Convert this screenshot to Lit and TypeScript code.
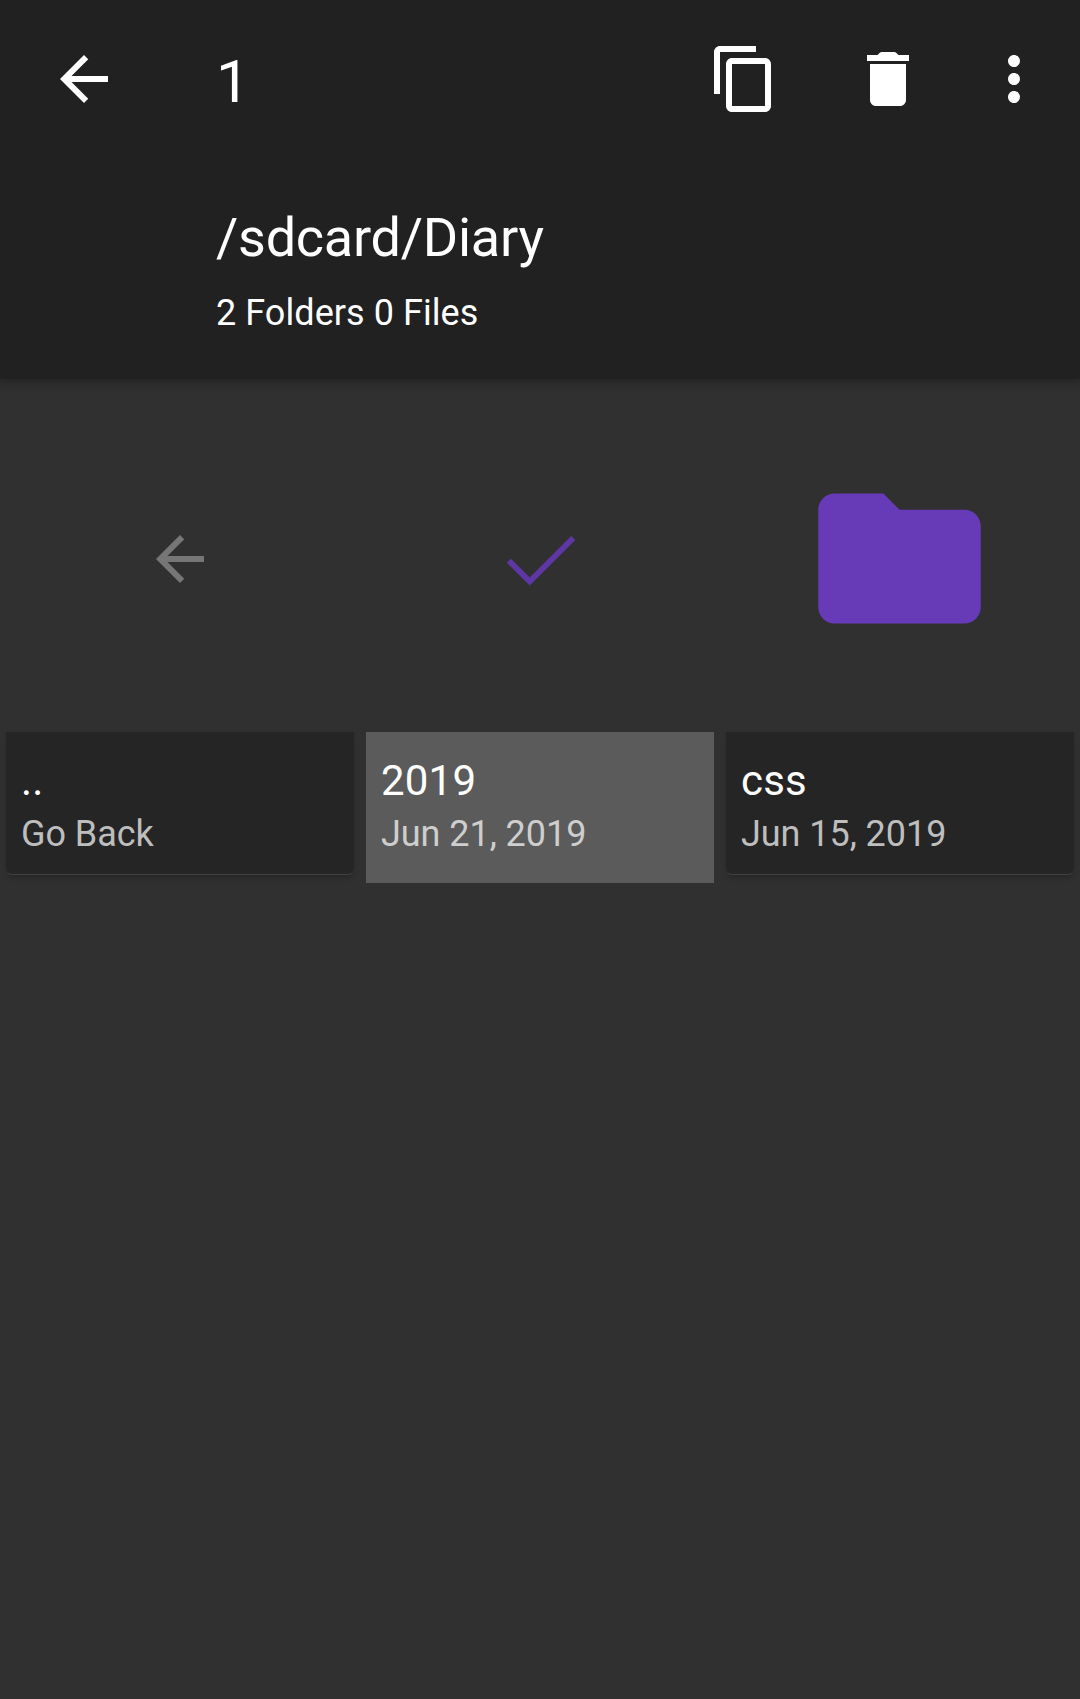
import { LitElement, html, css, svg } from "lit";
import { customElement } from "lit/decorators.js";
import { classMap } from "lit/directives/class-map.js";

const BACK = "M20 11H7.83l5.59-5.59L12 4l-8 8 8 8 1.41-1.41L7.83 13H20v-2z";
const COPY =
  "M16 1H4c-1.1 0-2 .9-2 2v14h2V3h12V1zm3 4H8c-1.1 0-2 .9-2 2v14c0 1.1.9 2 2 2h11c1.1 0 2-.9 2-2V7c0-1.1-.9-2-2-2zm0 16H8V7h11v14z";
const TRASH =
  "M6 19c0 1.1.9 2 2 2h8c1.1 0 2-.9 2-2V7H6v12zM19 4h-3.5l-.7-.7c-.2-.2-.45-.3-.7-.3H9.9c-.25 0-.5.1-.7.3L8.5 4H5v2h14V4z";
const MORE =
  "M12 8c1.1 0 2-.9 2-2s-.9-2-2-2-2 .9-2 2 .9 2 2 2zm0 2c-1.1 0-2 .9-2 2s.9 2 2 2 2-.9 2-2-.9-2-2-2zm0 6c-1.1 0-2 .9-2 2s.9 2 2 2 2-.9 2-2-.9-2-2-2z";
const CHECK = "M8.9 33.7L29.7 54.5 73.2 11";
const FOLDER =
  "M10 4H4c-1.1 0-2 .9-2 2v12c0 1.1.9 2 2 2h16c1.1 0 2-.9 2-2V8c0-1.1-.9-2-2-2h-8l-2-2z";

const icon = (d: string, cls = "icon") =>
  html`<svg class=${cls} viewBox="0 0 24 24">${svg`<path d=${d} />`}</svg>`;

const entries = [
  { name: "..", note: "Go Back", art: icon(BACK, "icon dim"), selected: false },
  {
    name: "2019",
    note: "Jun 21, 2019",
    art: html`<svg class="check" viewBox="0 0 80 64">${svg`<path d=${CHECK} />`}</svg>`,
    selected: true,
  },
  { name: "css", note: "Jun 15, 2019", art: icon(FOLDER, "folder"), selected: false },
];

@customElement("app-root")
export class AppRoot extends LitElement {
  static styles = css`
    :host {
      display: flex;
      flex-direction: column;
      height: 1699px;
      background: #303030;
      color: #fff;
      font-family: Roboto, sans-serif;
    }
    svg {
      display: block;
      fill: currentColor;
    }
    .icon {
      width: 72px;
      height: 72px;
    }
    header {
      box-sizing: border-box;
      height: 379px;
      background: #212121;
      box-shadow: 0 2px 9px 2px rgba(0, 0, 0, 0.25);
    }
    .bar {
      display: flex;
      align-items: center;
      height: 158px;
      padding: 0 30px 0 48px;
    }
    .count {
      flex: 1;
      padding: 6px 0 0 96px;
      font-size: 60px;
      line-height: 70px;
    }
    .actions {
      display: flex;
      gap: 72px;
    }
    .more {
      margin-left: -18px;
    }
    .path {
      padding: 48px 0 0 216px;
      font-size: 54px;
      line-height: 64px;
      letter-spacing: -0.25px;
    }
    .summary {
      padding: 22px 0 0 216px;
      font-size: 36px;
      line-height: 42px;
      letter-spacing: 0.06px;
    }
    .grid {
      display: grid;
      grid-template-columns: repeat(3, 348px);
      column-gap: 12px;
      padding: 6px 6px 0;
      align-items: start;
    }
    .art {
      display: flex;
      align-items: center;
      justify-content: center;
      height: 347px;
    }
    .dim {
      color: #767676;
    }
    .check {
      width: 80px;
      height: 64px;
      fill: none;
      stroke: #5f37a5;
      stroke-width: 5.8;
    }
    .folder {
      width: 195px;
      height: 195px;
      margin-right: 1px;
      color: #673ab7;
    }
    .label {
      box-sizing: border-box;
      height: 143px;
      padding: 24px 15px 0;
      background: #252525;
      border-bottom: 1px solid #414141;
      border-radius: 0 0 6px 6px;
      box-shadow: 0 4px 6px -2px rgba(0, 0, 0, 0.25);
    }
    .selected .label {
      height: 151px;
      background: #5b5b5b;
      border: 0;
      border-radius: 0;
      box-shadow: none;
    }
    .name {
      font-size: 42px;
      line-height: 49px;
      letter-spacing: 0.2px;
    }
    .note {
      padding-top: 8px;
      font-size: 36px;
      line-height: 42px;
      letter-spacing: -0.05px;
      color: #bebebe;
    }
    .selected .note {
      color: #cecece;
    }
  `;

  render() {
    return html`
      <header>
        <div class="bar">
          ${icon(BACK)}
          <div class="count">1</div>
          <div class="actions">
            ${icon(COPY)} ${icon(TRASH)} ${icon(MORE, "icon more")}
          </div>
        </div>
        <div class="path">/sdcard/Diary</div>
        <div class="summary">2 Folders 0 Files</div>
      </header>
      <main class="grid">
        ${entries.map(
          (e) => html`
            <section class=${classMap({ entry: true, selected: e.selected })}>
              <div class="art">${e.art}</div>
              <div class="label">
                <div class="name">${e.name}</div>
                <div class="note">${e.note}</div>
              </div>
            </section>
          `,
        )}
      </main>
    `;
  }
}
